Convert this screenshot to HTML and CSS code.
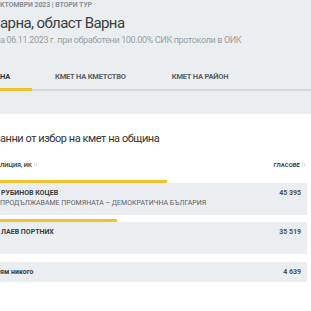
FILE: index.html
```html
<!DOCTYPE html>
<html lang="bg">
<head>
<meta charset="UTF-8">
<meta name="viewport" content="width=device-width, initial-scale=1.0">
<title>Варна, област Варна</title>
<link rel="stylesheet" href="styles.css">
</head>
<body>

<div class="top">
    <div class="kicker">КТОМВРИ 2023 | ВТОРИ ТУР</div>
    <h1 class="title">арна, област Варна</h1>
    <div class="sub">а 06.11.2023 г. при обработени 100.00% СИК протоколи в ОИК</div>
    <div class="tabs">
        <div class="tab active">НА</div>
        <div class="tab">КМЕТ НА КМЕТСТВО</div>
        <div class="tab">КМЕТ НА РАЙОН</div>
    </div>
</div>

<div class="results">
    <h2 class="section-title">анни от избор на кмет на община</h2>
    <div class="head-row">
        <span>ЛИЦИЯ, ИК<span class="sort">↑↓</span></span>
        <span>ГЛАСОВЕ<span class="sort">↑↓</span></span>
    </div>

    <div class="bar" style="width: 167px"></div>
    <div class="row">
        <div class="row-main">
            <span class="name">РУБИНОВ КОЦЕВ</span>
            <span class="votes">45 395</span>
        </div>
        <div class="party">ПРОДЪЛЖАВАМЕ ПРОМЯНАТА – ДЕМОКРАТИЧНА БЪЛГАРИЯ</div>
    </div>

    <div class="bar" style="width: 117px"></div>
    <div class="row">
        <div class="row-main">
            <span class="name">ЛАЕВ ПОРТНИХ</span>
            <span class="votes">35 519</span>
        </div>
        <div class="party"></div>
    </div>

    <div class="row single">
        <div class="row-main">
            <span class="name plain">ям никого</span>
            <span class="votes">4 639</span>
        </div>
    </div>
</div>

</body>
</html>
```

FILE: styles.css
```css
body {
    margin: 0;
    font-family: Roboto, "Noto Sans", sans-serif;
    color: #333;
    background: #fff;
}
.top {
    background-color: #ebeef1;
    padding-bottom: 23px;
}
.kicker {
    font-size: 7px;
    line-height: 10px;
    font-weight: bold;
    color: #8a8f94;
    letter-spacing: -0.1px;
}
.title {
    margin: 3px 0 0;
    font-size: 15px;
    line-height: 20px;
    font-weight: normal;
    color: #3a3d40;
    letter-spacing: -0.6px;
}
.sub {
    margin-top: 1px;
    font-size: 9px;
    line-height: 12px;
    color: #9a9ea3;
    letter-spacing: -0.35px;
}
.tabs {
    display: flex;
    margin-top: 20px;
    border-bottom: 2px solid #d6d9dc;
}
.tab {
    padding: 0 23px;
    font-size: 7.5px;
    line-height: 22px;
    font-weight: bold;
    color: #5a5e62;
    letter-spacing: -0.2px;
    border-bottom: 3px solid transparent;
    margin-bottom: -2px;
}
.tab:first-child {
    padding: 0 22px 0 0;
}
.tab.active {
    color: #333;
    border-bottom-color: #f2c22c;
}
.section-title {
    margin: 18px 0 0;
    font-size: 11px;
    line-height: 14px;
    font-weight: normal;
    color: #333;
    letter-spacing: -0.45px;
}
.head-row {
    display: flex;
    justify-content: space-between;
    margin-top: 14px;
    padding-right: 6px;
    font-size: 6px;
    line-height: 10px;
    font-weight: bold;
    color: #444;
}
.sort {
    font-size: 6px;
    font-weight: normal;
    color: #a0a4a8;
    vertical-align: top;
    line-height: 8px;
    margin-left: 1px;
    letter-spacing: -1px;
}
.bar {
    height: 3px;
    margin-top: 10px;
    background-color: #f2c22c;
}
.row + .bar {
    margin-top: 4px;
}
.row {
    background-color: #ebeef1;
    margin-right: 4px;
    padding: 5px 6px 7px 0;
}
.row-main {
    display: flex;
    justify-content: space-between;
    font-size: 7px;
    line-height: 10px;
}
.name {
    font-weight: bold;
    color: #3a3d40;
    padding-left: 1px;
}
.name.plain {
    padding-left: 0;
}
.votes {
    font-weight: bold;
    color: #4a4e52;
}
.party {
    font-size: 7px;
    line-height: 10px;
    height: 10px;
    color: #5d6166;
}
.row.single {
    margin-top: 8px;
    padding-top: 5px;
    padding-bottom: 5px;
}
```
